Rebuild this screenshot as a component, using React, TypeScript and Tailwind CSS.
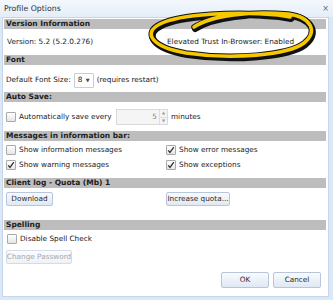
import React from 'react';

const font = { fontFamily: '"DejaVu Sans", Verdana, sans-serif' };

function SectionBar({ title }: { title: string }) {
  return (
    <div className="h-[10px] w-[322px] bg-[#bdbdbd] flex items-center pl-[2px] text-[7.5px] font-bold text-[#1c1c1c] leading-none">
      {title}
    </div>
  );
}

function CheckBox({ checked = false }: { checked?: boolean }) {
  return (
    <div className="w-[10px] h-[10px] rounded-[1px] border border-[#a9a9a9] bg-gradient-to-b from-white to-[#e6e6e6] flex items-center justify-center shrink-0">
      {checked && (
        <svg width="8" height="8" viewBox="0 0 8 8">
          <path d="M1.2 4.3 L3 6.4 L6.8 1.2" fill="none" stroke="#333" strokeWidth="1.3" />
        </svg>
      )}
    </div>
  );
}

function Check({ label, checked }: { label: string; checked?: boolean }) {
  return (
    <div className="flex items-center gap-[3px]">
      <CheckBox checked={checked} />
      <span>{label}</span>
    </div>
  );
}

function Btn({ label, w, h = 14, disabled = false }: { label: string; w: number; h?: number; disabled?: boolean }) {
  return (
    <div
      className={`flex items-center justify-center rounded-[2px] border shrink-0 ${disabled ? 'border-[#d3dce8] text-[#a8a8a8] bg-gradient-to-b from-[#fbfcfe] to-[#eef2f7]' : 'border-[#b7c6da] text-[#2a2a2a] bg-gradient-to-b from-[#f8fbfe] to-[#dfe8f3]'}`}
      style={{ width: w, height: h }}
    >
      {label}
    </div>
  );
}

export default function App() {
  return (
    <div className="w-[333px] h-[300px] bg-[#dde8f5] text-[7.3px] text-[#222] leading-none whitespace-nowrap overflow-hidden relative" style={font}>
      {/* Titel */}
      <div className="h-[17px] flex items-center justify-between pl-[4px] pr-[4px] bg-gradient-to-b from-[#f4f8fd] to-[#e4edf8]">
        <span className="text-[7.8px] text-[#333]">Profile Options</span>
        <span className="text-[8px] text-[#666]">×</span>
      </div>

      <div className="ml-[2px] w-[327px] h-[280px] bg-white border border-[#c6d6ea] pt-[1px] pl-[1px]">
        <SectionBar title="Version Information" />
        <div className="h-[26px] flex items-center">
          <span className="pl-[3px] w-[163px]">Version: 5.2 (5.2.0.276)</span>
          <span>Elevated Trust In-Browser: Enabled</span>
        </div>

        <SectionBar title="Font" />
        <div className="h-[27px] flex items-center pl-[2px] pt-[3px]">
          <span>Default Font Size:</span>
          <div className="ml-[3px] w-[20px] h-[15px] border border-[#c2cfe0] rounded-[1px] flex items-center justify-between px-[3px]">
            <span>8</span>
            <span className="text-[5px] text-[#444]">▼</span>
          </div>
          <span className="ml-[3px]">(requires restart)</span>
        </div>

        <SectionBar title="Auto Save:" />
        <div className="h-[29px] flex items-center pl-[2px] pt-[1px]">
          <CheckBox />
          <span className="ml-[3px] w-[97px]">Automatically save every</span>
          <div className="w-[52px] h-[16px] border border-[#dadada] bg-[#f5f5f5] flex items-center justify-end shrink-0">
            <span className="text-[#888] mr-[2px]">5</span>
            <div className="w-[8px] h-full border-l border-[#dedede] flex flex-col">
              <div className="flex-1 flex items-center justify-center text-[4px] text-[#999] border-b border-[#dedede]">▲</div>
              <div className="flex-1 flex items-center justify-center text-[4px] text-[#999]">▼</div>
            </div>
          </div>
          <span className="ml-[3px]">minutes</span>
        </div>

        <SectionBar title="Messages in information bar:" />
        <div className="grid grid-cols-[160px_1fr] gap-y-[5px] pl-[2px] pt-[4px] pb-[8px]">
          <Check label="Show information messages" />
          <Check label="Show error messages" checked />
          <Check label="Show warning messages" checked />
          <Check label="Show exceptions" checked />
        </div>

        <SectionBar title="Client log - Quota (Mb) 1" />
        <div className="h-[32px] flex items-start pl-[2px] pt-[4px]">
          <div className="w-[160px]">
            <Btn label="Download" w={47} />
          </div>
          <Btn label="Increase quota..." w={64} />
        </div>

        <SectionBar title="Spelling" />
        <div className="pl-[3px] pt-[4px]">
          <Check label="Disable Spell Check" />
        </div>
        <div className="pl-[2px] pt-[6px]">
          <Btn label="Change Password" w={66} disabled />
        </div>
        <div className="flex justify-end gap-[4px] pr-[7px] pt-[8px]">
          <Btn label="OK" w={48} h={16} />
          <Btn label="Cancel" w={48} h={16} />
        </div>
      </div>

      {/* Markierung */}
      <svg className="absolute left-0 top-0 pointer-events-none" width="333" height="300" viewBox="0 0 333 300">
        <g fill="none" strokeLinecap="round" strokeLinejoin="round">
          <g transform="translate(1.2 1.8)">
            <path d="M194 27 C212 15 250 11 288 14 C312 17 318 32 304 43 C288 55 232 60 186 53 C152 47 142 33 160 24 C180 14 235 11 278 15 L290 17" stroke="#111" strokeWidth="6.5" />
          </g>
          <path d="M194 27 C212 15 250 11 288 14 C312 17 318 32 304 43 C288 55 232 60 186 53 C152 47 142 33 160 24 C180 14 235 11 278 15 L290 17" stroke="#111" strokeWidth="5.5" />
          <path d="M194 27 C212 15 250 11 288 14 C312 17 318 32 304 43 C288 55 232 60 186 53 C152 47 142 33 160 24 C180 14 235 11 278 15 L290 17" stroke="#f6c800" strokeWidth="3.6" />
        </g>
      </svg>
    </div>
  );
}
